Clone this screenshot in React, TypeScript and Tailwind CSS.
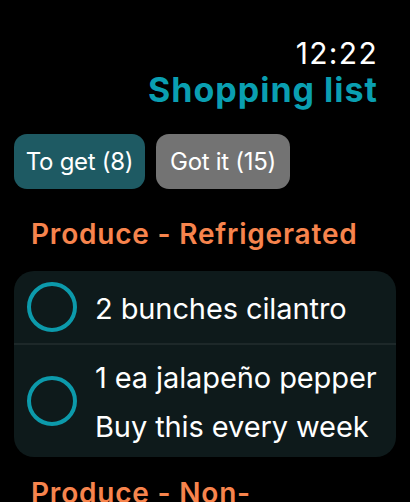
import React from "react";

const font = { fontFamily: "Inter, 'Noto Sans', sans-serif" };

function Circle() {
  return (
    <div className="w-[50px] h-[50px] rounded-full border-[4px] border-[#0c9aab] shrink-0" />
  );
}

export default function App() {
  return (
    <div
      className="w-[410px] h-[502px] bg-black overflow-hidden text-white flex flex-col"
      style={font}
    >
      <div className="flex flex-col items-end pr-[32px] pt-[36px]">
        <div className="text-[30px] leading-[34px] tracking-[1.3px]">12:22</div>
        <div className="text-[34px] leading-[40px] font-bold text-[#0a9fb1] tracking-[1px]">
          Shopping list
        </div>
      </div>
      <div className="flex gap-[11px] px-[14px] mt-[24px]">
        <div className="w-[131px] h-[55px] rounded-[13px] bg-[#1e5a63] flex items-center justify-center text-[24px] tracking-[-0.3px]">
          To get (8)
        </div>
        <div className="w-[134px] h-[55px] rounded-[13px] bg-[#737373] flex items-center justify-center text-[24px] tracking-[-0.3px]">
          Got it (15)
        </div>
      </div>
      <div className="pl-[31px] mt-[28px] text-[28px] leading-[34px] font-semibold text-[#f7844d] tracking-[0.8px] whitespace-nowrap">
        Produce - Refrigerated
      </div>
      <div className="mx-[14px] mt-[20px] rounded-[20px] bg-[#0e1a1b] flex flex-col">
        <div className="h-[74px] flex items-center pl-[13px] gap-[18px] border-b-2 border-[#1d2829]">
          <Circle />
          <div className="text-[29px] tracking-[-0.1px] whitespace-nowrap pt-[4px]">2 bunches cilantro</div>
        </div>
        <div className="h-[112px] flex items-center pl-[13px] gap-[18px]">
          <Circle />
          <div className="flex flex-col text-[29px] leading-[49px] tracking-[-0.1px] whitespace-nowrap pt-[2px]">
            <div>1 ea jalapeño pepper</div>
            <div>Buy this every week</div>
          </div>
        </div>
      </div>
      <div className="pl-[31px] mt-[19px] text-[28px] leading-[34px] font-semibold text-[#f7844d] tracking-[0.8px] whitespace-nowrap">
        Produce - Non-
      </div>
    </div>
  );
}
